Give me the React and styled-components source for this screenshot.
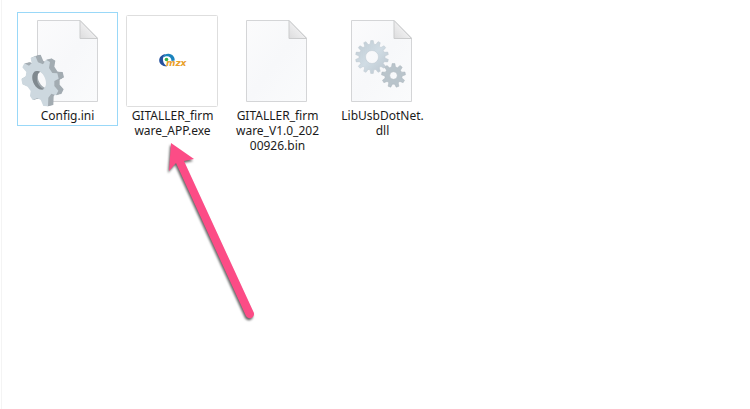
import styled, { createGlobalStyle } from 'styled-components';

const files = [
  { name: 'Config.ini', type: 'ini', selected: true },
  { name: 'GITALLER_firmware_APP.exe', type: 'exe', marked: true },
  { name: 'GITALLER_firmware_V1.0_20200926.bin', type: 'bin' },
  { name: 'LibUsbDotNet.dll', type: 'dll' },
];

// outline of a flat gear with slightly tapered teeth
const gearPath = (cx, cy, outer, inner, hole, teeth) => {
  const step = (Math.PI * 2) / teeth;
  const points = [];
  for (let i = 0; i < teeth; i++) {
    const a = i * step - Math.PI / 2;
    [[-0.32, inner], [-0.17, outer], [0.17, outer], [0.32, inner]].forEach(([t, r]) => {
      points.push(`${cx + r * Math.cos(a + t * step)} ${cy + r * Math.sin(a + t * step)}`);
    });
  }
  return `M${points.join('L')}ZM${cx - hole} ${cy}a${hole} ${hole} 0 1 0 ${hole * 2} 0a${hole} ${hole} 0 1 0 ${-hole * 2} 0Z`;
};

// front face of the tilted gear, its thickness is drawn by repeating it behind
const gearFace = 'M38 24L52 18L60 37L75 43L84 29L96 36L93 54L103 69L118 70L122 86L109 93L109 108L121 122L114 136L100 131L91 143L90 169L76 168L68 149L57 145L44 150L36 138L38 123L29 110L13 103L10 87L23 79L25 66L13 52L19 40L33 47L41 40ZM53 64C42 67 40 86 48 101C55 115 68 122 77 117C86 110 86 93 79 80C73 68 63 61 53 64Z';

function Sheet() {
  return (
    <>
      <defs>
        <linearGradient id='paper' x1='0' y1='0' x2='1' y2='1'>
          <stop offset='0' stopColor='#fbfbfc' />
          <stop offset='0.5' stopColor='#f7f8fa' />
          <stop offset='1' stopColor='#fafbfc' />
        </linearGradient>
        <linearGradient id='fold' x1='0' y1='1' x2='0.6' y2='0.4'>
          <stop offset='0' stopColor='#dcdcdd' />
          <stop offset='1' stopColor='#f1f1f2' />
        </linearGradient>
        <linearGradient id='steel' x1='0' y1='0' x2='1' y2='1'>
          <stop offset='0' stopColor='#bfcbd3' />
          <stop offset='0.5' stopColor='#d0dce4' />
          <stop offset='1' stopColor='#b9c4cd' />
        </linearGradient>
      </defs>
      <path d='M16.5 6.500H59L76.500 24V87.500H16.500Z' fill='url(#paper)' stroke='#d4d5d7' />
      <path d='M59 6.500V24.500H76.500Z' fill='url(#fold)' stroke='#cbcccd' />
    </>
  );
}

function IniIcon() {
  return (
    <Icon viewBox='0 0 93 93' aria-hidden='true'>
      <Sheet />
      <path d='M15 80H24V89H15Z' fill='#fff' />
      <g transform='translate(-3 36) scale(0.3333)' fillRule='evenodd'>
        {[16, 14, 12, 10, 8, 6, 4, 2].map((depth) => (
          <path key={depth} d={gearFace} transform={`translate(${depth} ${-depth / 4})`} fill='#a3acb2' />
        ))}
        <path d={gearFace} fill='#cdd8df' />
        <path d='M53 64C42 67 40 86 48 101C55 115 68 122 77 117C66 112 57 101 57 87C57 76 60 69 67 65C62 63 58 62 53 64Z' fill='#80898f' />
      </g>
    </Icon>
  );
}

function BinIcon() {
  return (
    <Icon viewBox='1 0 93 93' aria-hidden='true'>
      <Sheet />
    </Icon>
  );
}

function DllIcon() {
  return (
    <Icon viewBox='1 0 93 93' aria-hidden='true'>
      <Sheet />
      <path d={gearPath(37, 43, 16.5, 13, 6.5, 14)} fill='url(#steel)' fillRule='evenodd' stroke='#bcc7ce' strokeWidth='0.5' />
      <path d={gearPath(58.5, 61.5, 12, 8.7, 3.8, 9)} fill='#b9c4cb' fillRule='evenodd' stroke='#abb5bc' strokeWidth='0.5' />
    </Icon>
  );
}

function ExeIcon() {
  return (
    <Icon viewBox='0 0 93 93' aria-hidden='true'>
      <rect x='0.5' y='1.5' width='91' height='91' rx='1' fill='#fff' stroke='#dedede' />
      <path d='M41 52.500C36 52.500 33 49.500 33.200 46C33.500 42.500 37 40.200 40 40C37.500 42 36.500 44 37 46.500C37.500 49.500 39 51 41 52.500Z' fill='#24519f' />
      <path d='M37 43.500C37.500 41 40 39.600 42.500 39.700C46.500 40 49 43 48.700 46.500L45.500 47C45.500 44 43.500 42.300 41 42.300C39.500 42.300 38 43 37 43.500Z' fill='#1a83bd' />
      <circle cx='40.500' cy='45.500' r='1.800' fill='#36b04a' />
      <LogoText x='40' y='52'>mzx</LogoText>
    </Icon>
  );
}

const icons = { ini: IniIcon, exe: ExeIcon, bin: BinIcon, dll: DllIcon };

function Arrow() {
  return (
    <ArrowSvg viewBox='0 0 94 188' aria-hidden='true'>
      <path d='M10 8L33 24L23 26L92.500 177A4.200 4.200 0 0 1 85 181L15 28L8 36Z' />
    </ArrowSvg>
  );
}

function App() {
  return (
    <>
      <GlobalStyle />
      <Wrapper>
        <FileList>
          {files.map(({ name, type, selected, marked }) => {
            const FileIcon = icons[type];
            return (
              <Item key={name}>
                <Tile type='button' $selected={selected} aria-pressed={!!selected}>
                  <FileIcon />
                  <Name>{name}</Name>
                </Tile>
                {marked && <Arrow />}
              </Item>
            );
          })}
        </FileList>
      </Wrapper>
    </>
  );
}
export default App;

const GlobalStyle = createGlobalStyle`
* {
  box-sizing: border-box;
}

body {
  margin: 0;
  background: #fff;
}
`;

const Wrapper = styled.main`
min-height: 100vh;
margin-left: 1px;
padding: 12px 15px;
border-left: 1px solid #f4f4f4;
`;

const FileList = styled.ul`
display: flex;
flex-wrap: wrap;
align-items: flex-start;
gap: 4px;
margin: 0;
padding: 0;
list-style: none;
`;

const Item = styled.li`
position: relative;
width: 101px;
`;

const Tile = styled.button`
display: flex;
flex-direction: column;
align-items: center;
width: 100%;
padding: 1px 3px 2px;
border: 1px solid ${({ $selected }) => ($selected ? '#99d8f8' : 'transparent')};
background: transparent;
color: #1b1b1b;
font-family: 'Noto Sans', 'Open Sans', sans-serif;
font-size: 12px;
line-height: 15px;
`;

const Icon = styled.svg`
width: 93px;
height: 93px;
`;

const LogoText = styled.text`
fill: #e9a02b;
font: italic bold 9px 'DejaVu Sans', sans-serif;
`;

const Name = styled.span`
width: 88px;
margin-top: 1px;
text-align: center;
word-break: break-all;
`;

const ArrowSvg = styled.svg`
position: absolute;
top: 123px;
left: 39px;
width: 94px;
height: 188px;
pointer-events: none;
fill: #fc4c86;
filter: drop-shadow(-1px 2px 1px rgba(0, 0, 0, 0.6));
`;
